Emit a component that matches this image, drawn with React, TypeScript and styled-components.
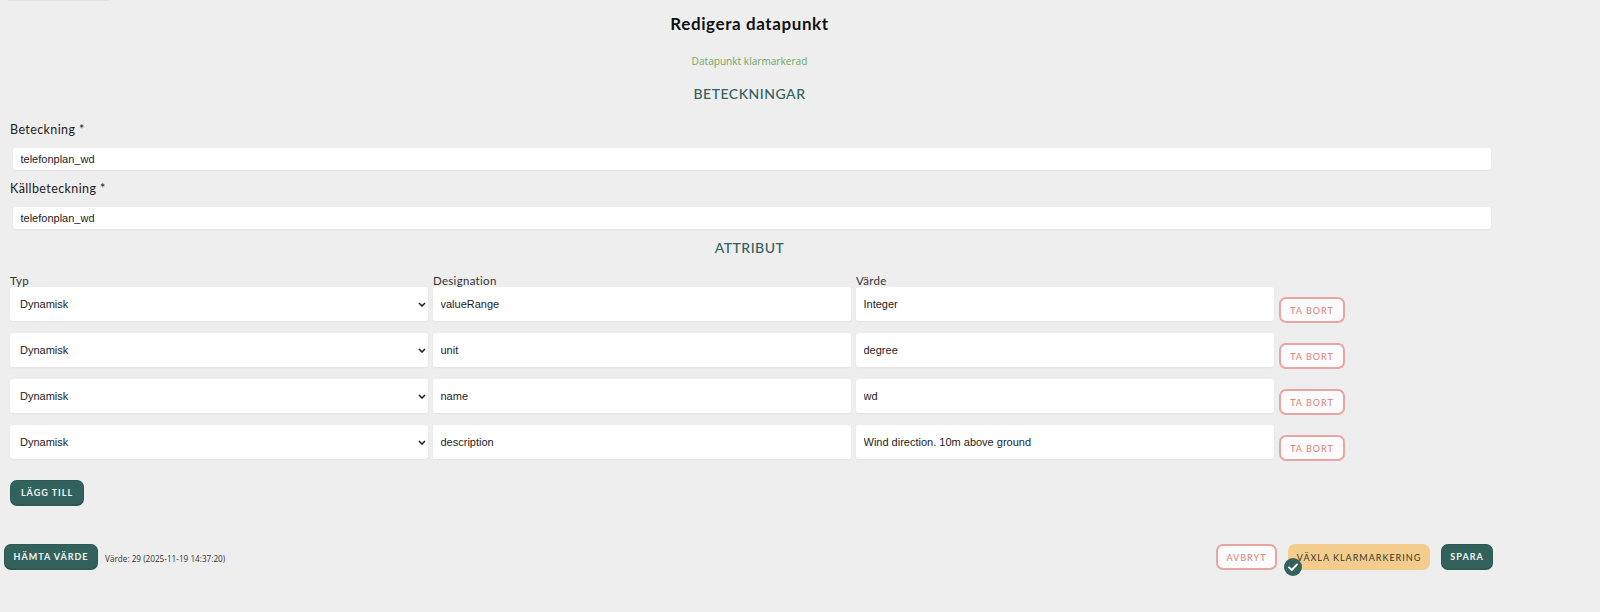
import React from "react";
import styled, { createGlobalStyle } from "styled-components";

const GlobalStyle = createGlobalStyle`
    html, body {
        margin: 0;
        padding: 0;
        background: #eeeeee;
    }
`;

const heading = `"Lato", "Noto Sans", sans-serif`;
const body = `"Liberation Sans", Arial, sans-serif`;

const chevron = `url("data:image/svg+xml,%3Csvg xmlns='http://www.w3.org/2000/svg' width='8' height='5' viewBox='0 0 8 5'%3E%3Cpath d='M1 1 L4 4 L7 1' fill='none' stroke='%23222222' stroke-width='1.6'/%3E%3C/svg%3E")`;

const rows = [
    { designation: "valueRange", value: "Integer" },
    { designation: "unit", value: "degree" },
    { designation: "name", value: "wd" },
    { designation: "description", value: "Wind direction. 10m above ground" },
];

export default function App() {
    return (
        <Page>
            <GlobalStyle />
            <TopStub />
            <Title>Redigera datapunkt</Title>
            <Status>Datapunkt klarmarkerad</Status>
            <SectionTitle $top={16}>BETECKNINGAR</SectionTitle>

            <Form>
                <FieldLabel $top={19}>Beteckning *</FieldLabel>
                <TextInput $wide readOnly value="telefonplan_wd" />
                <FieldLabel $top={11}>Källbeteckning *</FieldLabel>
                <TextInput $wide readOnly value="telefonplan_wd" />
            </Form>

            <SectionTitle $top={10}>ATTRIBUT</SectionTitle>

            <Attributes>
                <HeaderRow>
                    <ColLabel>Typ</ColLabel>
                    <ColLabel>Designation</ColLabel>
                    <ColLabel>Värde</ColLabel>
                </HeaderRow>
                {rows.map((row) => (
                    <AttrRow key={row.designation}>
                        <SelectInput defaultValue="Dynamisk">
                            <option>Dynamisk</option>
                            <option>Statisk</option>
                        </SelectInput>
                        <TextInput readOnly value={row.designation} />
                        <TextInput readOnly value={row.value} />
                        <OutlineButton $remove>TA BORT</OutlineButton>
                    </AttrRow>
                ))}
                <AddRow>
                    <SolidButton $width={74}>LÄGG TILL</SolidButton>
                </AddRow>
            </Attributes>

            <Footer>
                <FetchGroup>
                    <SolidButton $width={94}>HÄMTA VÄRDE</SolidButton>
                    <ValueText>Värde: 29 (2025-11-19 14:37:20)</ValueText>
                </FetchGroup>
                <Actions>
                    <OutlineButton>AVBRYT</OutlineButton>
                    <ToggleButton>
                        VÄXLA KLARMARKERING
                        <CheckBadge>
                            <svg width="12" height="12" viewBox="0 0 12 12" fill="none">
                                <path
                                    d="M2 6.4 L4.8 9 L10 3.4"
                                    stroke="#ffffff"
                                    strokeWidth="1.9"
                                    strokeLinecap="round"
                                    strokeLinejoin="round"
                                />
                            </svg>
                        </CheckBadge>
                    </ToggleButton>
                    <SolidButton $width={52}>SPARA</SolidButton>
                </Actions>
            </Footer>
        </Page>
    );
}

const Page = styled.div`
    width: 1600px;
    height: 612px;
    overflow: hidden;
    background: #eeeeee;
    box-sizing: border-box;
`;

const TopStub = styled.div`
    width: 103px;
    height: 1px;
    margin-left: 7px;
    background: #e3e3e3;
    border-radius: 0 0 4px 4px;
`;

const Title = styled.h1`
    width: 1499px;
    margin: 14px 0 0;
    height: 18px;
    line-height: 18px;
    text-align: center;
    font-family: ${heading};
    font-size: 17px;
    font-weight: 700;
    letter-spacing: 0.6px;
    color: #111111;
`;

const Status = styled.p`
    width: 1499px;
    margin: 20px 0 0;
    height: 16px;
    line-height: 16px;
    text-align: center;
    font-family: "Open Sans", sans-serif;
    font-size: 10.1px;
    color: #6da765;
`;

const SectionTitle = styled.h2<{ $top: number }>`
    width: 1499px;
    margin: ${({ $top }) => $top}px 0 0;
    height: 18px;
    line-height: 18px;
    text-align: center;
    font-family: ${heading};
    font-size: 14px;
    font-weight: 500;
    letter-spacing: 0.5px;
    color: #33625c;
`;

const Form = styled.div`
    display: flex;
    flex-direction: column;
    padding-left: 10px;
`;

const FieldLabel = styled.label<{ $top: number }>`
    margin-top: ${({ $top }) => $top}px;
    margin-bottom: 10px;
    height: 16px;
    line-height: 16px;
    font-family: ${heading};
    font-size: 12.5px;
    letter-spacing: 0.4px;
    color: #222222;
`;

const TextInput = styled.input<{ $wide?: boolean }>`
    box-sizing: border-box;
    width: ${({ $wide }) => ($wide ? "1478px" : "418px")};
    height: ${({ $wide }) => ($wide ? "22px" : "34px")};
    margin-left: ${({ $wide }) => ($wide ? "3px" : "0")};
    padding: 0 7.5px;
    border: none;
    outline: none;
    border-radius: 3px;
    background: #ffffff;
    box-shadow: 0 1px 2px rgba(0, 0, 0, 0.05);
    font-family: ${body};
    font-size: 11px;
    color: #1c1c1c;
`;

const Attributes = styled.div`
    display: flex;
    flex-direction: column;
    padding-left: 10px;
    margin-top: 18px;
`;

const HeaderRow = styled.div`
    display: flex;
    height: 11px;
    margin-bottom: 1px;
    align-items: center;
`;

const ColLabel = styled.span`
    width: 423px;
    font-family: ${heading};
    font-size: 11.5px;
    letter-spacing: 0.3px;
    color: #333333;
`;

const AttrRow = styled.div`
    display: flex;
    align-items: flex-start;
    gap: 5px;
    height: 34px;
    margin-bottom: 12px;
`;

const SelectInput = styled.select`
    box-sizing: border-box;
    appearance: none;
    width: 418px;
    height: 34px;
    padding: 0 14px 0 10px;
    border: none;
    outline: none;
    border-radius: 3px;
    background: #ffffff ${chevron} no-repeat right 2px center;
    box-shadow: 0 1px 2px rgba(0, 0, 0, 0.05);
    font-family: ${body};
    font-size: 11px;
    color: #1c1c1c;
`;

const buttonBase = `
    box-sizing: border-box;
    height: 26px;
    border-radius: 7px;
    font-family: ${heading};
    font-size: 9px;
    letter-spacing: 1px;
    white-space: nowrap;
    cursor: pointer;
`;

const SolidButton = styled.button<{ $width: number }>`
    ${buttonBase}
    width: ${({ $width }) => $width}px;
    padding: 0;
    border: 1px solid #2b5a53;
    border-bottom-width: 2px;
    background: #33625c;
    color: #f2f6f5;
    font-weight: 700;
`;

const OutlineButton = styled.button<{ $remove?: boolean }>`
    ${buttonBase}
    width: ${({ $remove }) => ($remove ? "66px" : "61px")};
    margin-top: ${({ $remove }) => ($remove ? "10px" : "0")};
    padding: 0;
    border: 2px solid #e8a5a3;
    background: #fbfbfb;
    color: #d98a88;
    font-weight: 500;
`;

const ToggleButton = styled.button`
    ${buttonBase}
    position: relative;
    width: 142px;
    padding: 0;
    border: none;
    background: #f4cd8e;
    color: #3a3428;
`;

const CheckBadge = styled.span`
    position: absolute;
    left: -4px;
    top: 14px;
    width: 18px;
    height: 18px;
    border-radius: 50%;
    background: #33625c;
    display: flex;
    align-items: center;
    justify-content: center;
`;

const AddRow = styled.div`
    padding-top: 9px;
`;

const Footer = styled.div`
    display: flex;
    justify-content: space-between;
    align-items: center;
    margin-top: 38px;
    padding: 0 107px 0 4px;
`;

const FetchGroup = styled.div`
    display: flex;
    align-items: center;
    gap: 7px;
`;

const ValueText = styled.span`
    margin-top: 2px;
    font-family: "Open Sans", sans-serif;
    font-size: 8.2px;
    color: #333333;
`;

const Actions = styled.div`
    display: flex;
    align-items: center;
    gap: 11px;
`;
